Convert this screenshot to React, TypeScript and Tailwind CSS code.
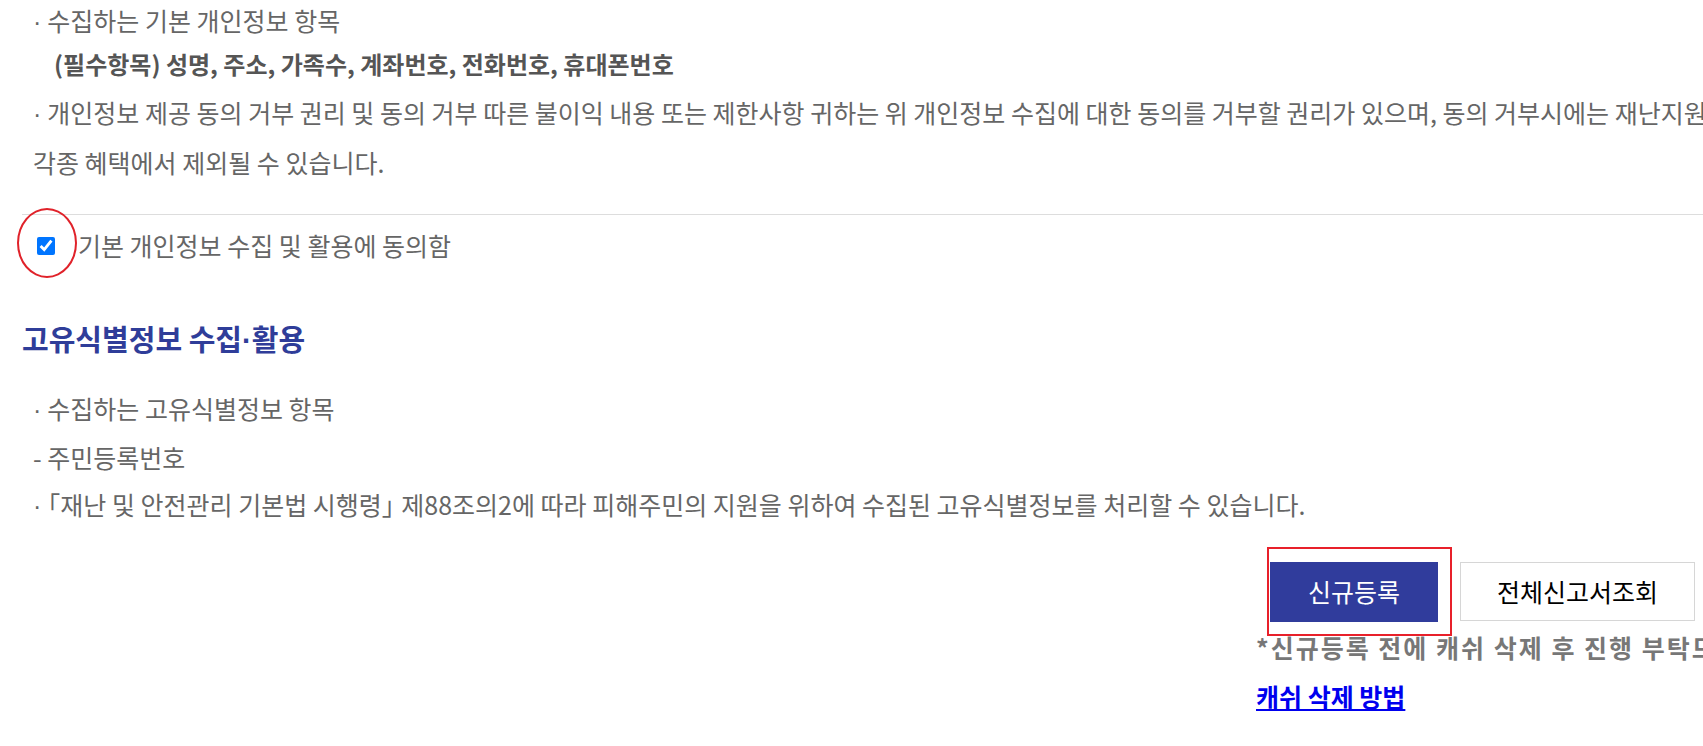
export default function App() {
  const font = { fontFamily: '"Noto Sans CJK KR", "Noto Sans", sans-serif' }
  const dot = <span className="font-['Liberation_Sans',sans-serif] mr-[6px]">·</span>
  return (
    <div className="w-[1703px] h-[746px] overflow-hidden bg-white" style={font}>
      <div className="w-[1900px] pl-[22px]">
        <div className="pl-[11px] text-[25px] text-[#666] leading-[48px]">
          <p className="h-[40px] leading-[40px]">{dot}수집하는 기본 개인정보 항목</p>
          <p className="pl-[21px] text-[24px] font-bold text-[#555]">(필수항목) 성명, 주소, 가족수, 계좌번호, 전화번호, 휴대폰번호</p>
          <p className="whitespace-nowrap">
            {dot}개인정보 제공 동의 거부 권리 및 동의 거부 따른 불이익 내용 또는 제한사항 귀하는 위 개인정보 수집에 대한 동의를 거부할 권리가 있으며, 동의 거부시에는 재난지원금 지급 등
          </p>
          <p>각종 혜택에서 제외될 수 있습니다.</p>
        </div>

        <div className="mt-[28px] border-t border-[#ddd]" />

        <div className="relative flex items-center h-[62px] pl-[15px]">
          <span className="absolute left-[-5px] top-[-7px] w-[60px] h-[70px] rounded-[50%] border-2 border-[#e0222a]" />
          <input
            type="checkbox"
            defaultChecked
            className="w-[18px] h-[18px] accent-[#0075ff] m-0"
          />
          <span className="ml-[23px] text-[25px] text-[#666]">기본 개인정보 수집 및 활용에 동의함</span>
        </div>

        <h2 className="mt-[41px] text-[29px] font-bold text-[#2f3d99] leading-[40px]">
          고유식별정보 수집<span className="font-['Liberation_Sans',sans-serif]">·</span>활용
        </h2>

        <div className="mt-[24px] pl-[11px] text-[25px] text-[#666] leading-[47px]">
          <p>{dot}수집하는 고유식별정보 항목</p>
          <p>- 주민등록번호</p>
          <p className="whitespace-nowrap">
            <span className="font-['Liberation_Sans',sans-serif]">·</span>
            <span className="inline-block ml-[-6px]">「</span>재난 및 안전관리 기본법 시행령
            <span className="tracking-[-11px]">」</span> 제88조의2에 따라 피해주민의 지원을 위하여 수집된 고유식별정보를 처리할 수 있습니다.
          </p>
        </div>

        <div className="pl-[1234px] mt-[17px]">
          <div className="ml-[11px] flex items-start gap-[8px]">
            <div className="border-2 border-[#e8202a] p-[13px_12px_12px_1px]">
              <button className="w-[168px] h-[60px] bg-[#303c9c] text-white text-[25px]">신규등록</button>
            </div>
            <button className="mt-[15px] w-[235px] h-[59px] border border-[#d6d6d6] bg-white text-black text-[25px]">
              전체신고서조회
            </button>
          </div>
          <p className="whitespace-nowrap text-[25px] font-bold text-[#777] tracking-[2px] leading-[24px] mt-[-1px]">
            *신규등록 전에 캐쉬 삭제 후 진행 부탁드립니다.
          </p>
          <a href="#" className="inline-block mt-[25px] text-[25px] font-bold text-[#0000ee] underline leading-[24px]">
            캐쉬 삭제 방법
          </a>
        </div>
      </div>
    </div>
  )
}
